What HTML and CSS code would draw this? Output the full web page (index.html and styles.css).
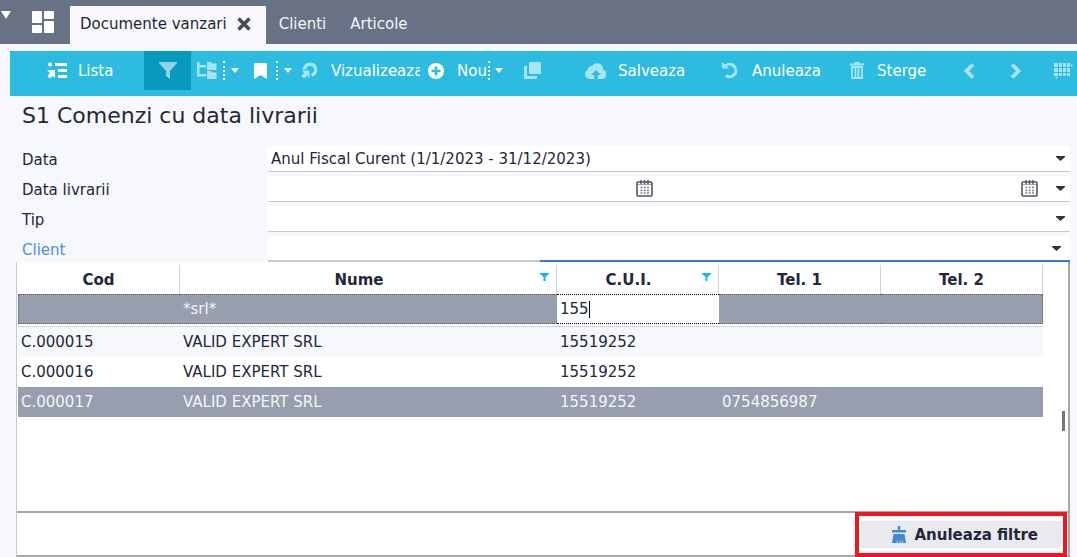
FILE: index.html
```html
<!DOCTYPE html>
<html lang="ro">
<head>
<meta charset="utf-8">
<title>Documente vanzari</title>
<link rel="stylesheet" href="styles.css">
</head>
<body>
<header class="tabs">
  <button class="apps" aria-label="Meniu">
    <svg class="corner" width="12" height="8" viewBox="0 0 12 8"><path d="M1 0h10L6 8z" fill="#fff"/></svg>
    <svg width="22" height="22" viewBox="0 0 22 22" fill="#fff"><rect width="10" height="12" rx="1"/><rect x="12" width="10" height="8" rx="1"/><rect y="14" width="10" height="8" rx="1"/><rect x="12" y="10" width="10" height="12" rx="1"/></svg>
  </button>
  <div class="tab tab-active"><span>Documente vanzari</span>
    <button class="close" aria-label="Inchide"><svg width="14" height="14" viewBox="0 0 14 14" fill="none" stroke="#454a54" stroke-width="3.6"><path d="M1.5 1.5l11 11M12.5 1.5l-11 11"/></svg></button>
  </div>
  <a class="tab" href="#">Clienti</a>
  <a class="tab" href="#">Articole</a>
</header>

<nav class="toolbar">
  <button class="tool"><svg width="20" height="17" viewBox="0 0 20 17" fill="#fff"><circle cx="3" cy="2.5" r="2"/><path d="M8 1h12v3H8zM11 7h9v3h-9zM11 13h9v3h-9zM0 8h8v8l-2.200-2.200L3 16.600.4 14l2.800-2.800z"/></svg><span>Lista</span></button>
  <button class="tool tool-on" aria-label="Filtru"><svg width="18" height="17" viewBox="0 0 18 17" fill="#8fd3e6"><path d="M0 0h18v1l-7 8v8l-4-3V9L0 1z"/></svg></button>
  <button class="tool split" aria-label="Grupare"><svg width="20" height="17" viewBox="0 0 20 17" fill="#a6e4f3"><path d="M0 0h2.500v3H9v2.500H2.500V12H9v2.500H0zM10 0h4l1 1.500h4.500V8H10zM10 9h4l1 1.500h4.500V17H10z"/></svg><i class="dots"></i><svg class="caret" width="8" height="5" viewBox="0 0 8 5"><path d="M0 0h8L4 5z" fill="#fff"/></svg></button>
  <button class="tool split" aria-label="Marcaj"><svg class="mark" width="13" height="16" viewBox="0 0 13 16" fill="#fff"><path d="M1 0h11l1 1v15l-6.500-4L0 16V1z"/></svg><i class="dots"></i><svg class="caret" width="8" height="5" viewBox="0 0 8 5"><path d="M0 0h8L4 5z" fill="#fff"/></svg></button>
  <button class="tool wide"><svg width="17" height="17" viewBox="0 0 17 17"><path d="M3.500 7.500A5.600 5.600 0 1 1 10.500 13.200" fill="none" stroke="#a6e4f3" stroke-width="3.400"/><path d="M1 8.500h7.500V16l-2.300-2.300L3 16.500 0 14l3-3z" fill="#a6e4f3"/></svg><span class="clip">Vizualizeaza</span></button>
  <button class="tool wide"><svg width="16" height="16" viewBox="0 0 16 16"><circle cx="8" cy="8" r="8" fill="#fff"/><path d="M8 3.500v9M3.500 8h9" stroke="#2dbbe0" stroke-width="2.600"/></svg><span>Nou</span><i class="dots dots-tight"></i><svg class="caret" width="8" height="5" viewBox="0 0 8 5"><path d="M0 0h8L4 5z" fill="#fff"/></svg></button>
  <button class="tool" aria-label="Copiaza"><svg width="17" height="17" viewBox="0 0 17 17" fill="#a6e4f3"><rect x="5" width="12" height="12" rx="1"/><path d="M0 5q0-1 1-1h2v10h10v2q0 1-1 1H1q-1 0-1-1z"/></svg></button>
  <button class="tool"><svg width="22" height="17" viewBox="0 0 22 17"><path d="M5 17a5 5 0 0 1-2.500-9.300A5 5 0 0 1 7 4a6 6 0 0 1 11 3.500A5 5 0 0 1 17.500 17z" fill="#a6e4f3"/><path d="M11 8l5 5h-3.200v4H9.200v-4H6z" fill="#2dbbe0"/></svg><span>Salveaza</span></button>
  <button class="tool wide"><svg width="17" height="17" viewBox="0 0 17 17"><path d="M3.500 4A6.200 6.200 0 1 1 4 13.500" fill="none" stroke="#a6e4f3" stroke-width="3"/><path d="M0 0l2.500 2L7 6.500H0z" fill="#a6e4f3"/></svg><span>Anuleaza</span></button>
  <button class="tool wide"><svg width="14" height="17" viewBox="0 0 14 17" fill="none" stroke="#a6e4f3" stroke-width="1.800"><path d="M0 2.500h14M4.500 1h5M2 5h10v11H2zM5.500 5v11M8.500 5v11"/></svg><span>Sterge</span></button>
  <button class="tool" aria-label="Inapoi"><svg width="12" height="16" viewBox="0 0 12 16" fill="none" stroke="#a6e4f3" stroke-width="3.800"><path d="M10 1.500L3.500 8l6.500 6.500"/></svg></button>
  <button class="tool" aria-label="Inainte"><svg width="12" height="16" viewBox="0 0 12 16" fill="none" stroke="#a6e4f3" stroke-width="3.800"><path d="M2 1.500L8.500 8 2 14.500"/></svg></button>
  <button class="tool" aria-label="Tabel"><svg width="19" height="16" viewBox="0 0 19 16" fill="#a6e4f3"><path d="M0 0h4v4H0zM5 0h3v4H5zM9 0h3v4H9zM13 0h3v4h-3zM17 1l2 1.500L17 4zM0 5h4v4H0zM5 5h3v4H5zM9 5h3v4H9zM13 5h3v4h-3zM0 10h4v3H0zM5 10h3v3H5zM9 10h3v3H9zM13 10h3v3h-3zM1 14h3l-1.500 2z"/></svg></button>
</nav>

<main class="page">
  <h1>S1 Comenzi cu data livrarii</h1>
  <form class="filters">
    <label for="data">Data</label>
    <div class="field"><select id="data"><option>Anul Fiscal Curent (1/1/2023 - 31/12/2023)</option></select><svg class="arrow" width="9" height="5" viewBox="0 0 9 5"><path d="M0 0h9v1L4.500 5 0 1z"/></svg></div>

    <label for="livrare">Data livrarii</label>
    <div class="field">
      <input id="livrare" type="text">
      <svg class="cal" width="17" height="17" viewBox="0 0 17 17"><rect x="1" y="2" width="15" height="14" rx="1" fill="none" stroke="#50555f" stroke-width="1.600"/><path d="M2 4.500h13" stroke="#a0a4ac"/><path d="M5 0v4M8.500 0v4M12 0v4" stroke="#50555f" stroke-width="1.400"/><path d="M4.500 7.500h8.500M4.500 10.500h8.500M4.500 13h8.500" stroke="#70747d" stroke-width="1.400" stroke-dasharray="1.800 1.500"/></svg>
      <input type="text" aria-label="Data livrarii pana la">
      <svg class="cal" width="17" height="17" viewBox="0 0 17 17"><rect x="1" y="2" width="15" height="14" rx="1" fill="none" stroke="#50555f" stroke-width="1.600"/><path d="M2 4.500h13" stroke="#a0a4ac"/><path d="M5 0v4M8.500 0v4M12 0v4" stroke="#50555f" stroke-width="1.400"/><path d="M4.500 7.500h8.500M4.500 10.500h8.500M4.500 13h8.500" stroke="#70747d" stroke-width="1.400" stroke-dasharray="1.800 1.500"/></svg>
      <span class="arrow-slot"></span><svg class="arrow" width="9" height="5" viewBox="0 0 9 5"><path d="M0 0h9v1L4.500 5 0 1z"/></svg>
    </div>

    <label for="tip">Tip</label>
    <div class="field"><select id="tip"><option></option></select><svg class="arrow" width="9" height="5" viewBox="0 0 9 5"><path d="M0 0h9v1L4.500 5 0 1z"/></svg></div>

    <label for="client" class="link">Client</label>
    <div class="field field-open"><input id="client" type="text"><svg class="arrow arrow-in" width="9" height="5" viewBox="0 0 9 5"><path d="M0 0h9v1L4.500 5 0 1z"/></svg></div>
  </form>

  <section class="popup">
    <div class="list">
      <table>
        <colgroup><col class="c"><col><col class="c"><col class="c"><col class="c"></colgroup>
        <thead>
          <tr>
            <th>Cod</th>
            <th class="filtered">Nume<svg class="funnel" width="9" height="8" viewBox="0 0 9 8"><path d="M0 0h9v1L5.500 4v4h-2V4L0 1z" fill="#16b9e6"/></svg></th>
            <th class="filtered">C.U.I.<svg class="funnel" width="9" height="8" viewBox="0 0 9 8"><path d="M0 0h9v1L5.500 4v4h-2V4L0 1z" fill="#16b9e6"/></svg></th>
            <th>Tel. 1</th>
            <th>Tel. 2</th>
          </tr>
          <tr class="search">
            <td></td><td>*srl*</td>
            <td class="edit"><div class="edit-box"><input class="cui" aria-label="C.U.I." value="155"><i class="cursor"></i></div></td>
            <td></td><td></td>
          </tr>
          <tr class="rule"><td colspan="5"></td></tr>
        </thead>
        <tbody>
          <tr class="odd"><td>C.000015</td><td>VALID EXPERT SRL</td><td>15519252</td><td></td><td></td></tr>
          <tr><td>C.000016</td><td>VALID EXPERT SRL</td><td>15519252</td><td></td><td></td></tr>
          <tr class="selected"><td>C.000017</td><td>VALID EXPERT SRL</td><td>15519252</td><td>0754856987</td><td></td></tr>
        </tbody>
      </table>
      <i class="thumb"></i>
    </div>
    <footer class="foot">
      <div class="highlight">
        <button class="clear"><svg width="16" height="17" viewBox="0 0 16 17" fill="#3f87d9"><path d="M6.800 0h2.400v4H15v2.500H1V4h5.800zM2.500 8h11l1.500 9h-3l-.4-3.500-.6 3.500H9.600l-.4-3.500-.6 3.500H6.600l-.4-3.500-.8 3.500H1z"/></svg>Anuleaza filtre</button>
      </div>
    </footer>
  </section>
</main>
</body>
</html>
```
FILE: styles.css
```css
* { box-sizing: border-box; }
body {
  margin: 0;
  min-height: 100vh;
  display: flex;
  flex-direction: column;
  background: #f7f8fb;
  color: #24273a;
  font: 15px/20px "DejaVu Sans", Verdana, sans-serif;
}
button, input, select { font: inherit; color: inherit; border: 0; padding: 0; margin: 0; background: none; }
svg { flex: none; display: block; }
a { text-decoration: none; }

.tabs { display: flex; height: 44px; padding-top: 6px; background: #687284; }
.apps { position: relative; width: 70px; padding: 0 0 6px 32px; }
.corner { position: absolute; left: 0; top: 5px; }
.tab { display: flex; align-items: center; padding: 0 0 2px 13px; margin-right: 11px; color: #f4f5f8; }
.tab-active { padding: 0 15px 2px 10px; margin-right: 0; gap: 10px; background: #f7f8fb; color: #24273a; }

.toolbar {
  display: grid;
  grid-template-columns: 103px 47px 57px 47px 127px 96px 61px 137px 128px 113px 47px 44px 1fr;
  height: 45px;
  margin: 7px 0 0 10px;
  padding-left: 31px;
  overflow: hidden;
  background: #2dbbe0;
  color: #fff;
}
.tool { display: flex; align-items: center; gap: 11px; height: 39px; padding-left: 6px; overflow: hidden; white-space: nowrap; }
.wide { gap: 13px; }
.split { gap: 6px; }
.tool-on { justify-content: center; padding: 0; background: #0899be; }
.mark { margin-right: 3px; }
.clip { width: 89px; overflow: hidden; text-align: left; }
.dots { flex: none; height: 19px; border-left: 2px dotted #fff; }
.dots-tight { margin: 0 -8px 0 -12px; }

.page { flex: 1; display: flex; flex-direction: column; padding: 5px 7px 0 16px; }
h1 { margin: 0 0 16px 6px; font-size: 22px; line-height: 29px; font-weight: 400; }
.filters { display: grid; grid-template-columns: 246px 1fr; grid-auto-rows: 26px; row-gap: 4px; padding-left: 6px; }
.filters label { align-self: center; padding-top: 2px; }
.filters .link { color: #4a90e0; }
.field { display: flex; align-items: center; min-width: 0; padding-right: 5px; border-bottom: 1px solid #c8c9cc; background: #fff; }
.field select, .field input { flex: 1; min-width: 0; height: 24px; padding-left: 3px; appearance: none; outline: 0; }
.field-open { border-image: linear-gradient(90deg, #c8c9cc 34%, #3b78c8 34%) 2; border-width: 0 0 2px; }
.arrow { fill: #30333c; }
.arrow-in { margin-right: 4px; }
.arrow-slot { width: 18px; }

.popup { flex: 1; display: flex; flex-direction: column; border: 1px solid #c9cacd; border-top: 0; border-right: 2px solid #a8a8a8; border-bottom: 2px solid #a8a8a8; background: #fff; }
.list { flex: 1; display: flex; align-items: flex-start; padding: 3px 3px 0 1px; border-bottom: 2px solid #a8a8a8; }
table { flex: 1; border-collapse: separate; border-spacing: 0; table-layout: fixed; }
.c { width: 162px; }
th { position: relative; height: 29px; padding: 0; border-right: 1px solid #d2d3d6; }
.filtered { padding-right: 18px; }
.funnel { position: absolute; right: 7px; top: 8px; }
td { height: 30px; padding: 0 3px; }
.search td { background: #979eae; color: #f4f5f8; border: dotted #5a5c60; border-width: 1px 0; }
.search td:first-child { border-left-width: 1px; }
.search td:last-child { border-right-width: 1px; }
.search .edit { padding: 0 3px; background: #fff; color: #24273a; border-color: #000; }
.edit-box { display: flex; align-items: center; }
.cui { width: 29px; height: 24px; outline: 0; }
.cursor { width: 1px; height: 17px; background: #000; }
.rule td { height: 3px; padding: 0; border-bottom: 1px solid #d2d3d6; }
.odd td { background: #f7f8fb; }
.selected td { background: #979eae; color: #f4f5f8; }
.thumb { width: 3px; height: 20px; margin: 146px 0 0 19px; background: #777; }

.foot { display: flex; justify-content: flex-end; height: 42px; padding-right: 1px; }
.highlight { display: flex; margin: -1px 0 -2px; padding: 5px 2px; border: 4px solid #ee1620; }
.clear { display: flex; align-items: center; gap: 8px; padding: 0 23px 0 30px; background: #e8eaee; font-weight: 700; }
```
